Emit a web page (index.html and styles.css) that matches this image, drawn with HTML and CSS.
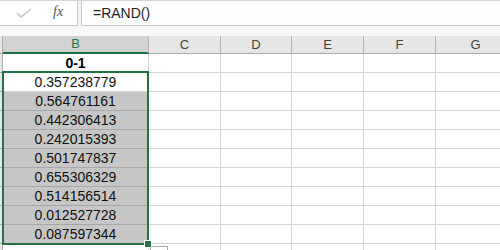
FILE: index.html
```html
<!DOCTYPE html>
<html>
<head>
<meta charset="utf-8">
<link rel="stylesheet" href="styles.css">
</head>
<body>
<div class="app">
  <div class="formula-bar">
    <div class="fb-left">
      <svg class="check" width="16" height="10" viewBox="0 0 16 10"><path d="M1 5 L5 9 L15 1" fill="none" stroke="#c4c4c4" stroke-width="1.6"/></svg>
      <span class="fx">fx</span>
    </div>
    <div class="fb-sep"></div>
    <div class="fb-input">=RAND()</div>
  </div>
  <div class="spacer"></div>
  <div class="sheet">
    <div class="grid">
      <div class="hc rh"></div>
      <div class="hc sel">B</div>
      <div class="hc">C</div>
      <div class="hc">D</div>
      <div class="hc">E</div>
      <div class="hc">F</div>
      <div class="hc">G</div>

      <div class="c rh"></div><div class="c title">0-1</div><div class="c"></div><div class="c"></div><div class="c"></div><div class="c"></div><div class="c"></div>
      <div class="c rh"></div><div class="c num active">0.357238779</div><div class="c"></div><div class="c"></div><div class="c"></div><div class="c"></div><div class="c"></div>
      <div class="c rh"></div><div class="c num shade">0.564761161</div><div class="c"></div><div class="c"></div><div class="c"></div><div class="c"></div><div class="c"></div>
      <div class="c rh"></div><div class="c num shade">0.442306413</div><div class="c"></div><div class="c"></div><div class="c"></div><div class="c"></div><div class="c"></div>
      <div class="c rh"></div><div class="c num shade">0.242015393</div><div class="c"></div><div class="c"></div><div class="c"></div><div class="c"></div><div class="c"></div>
      <div class="c rh"></div><div class="c num shade">0.501747837</div><div class="c"></div><div class="c"></div><div class="c"></div><div class="c"></div><div class="c"></div>
      <div class="c rh"></div><div class="c num shade">0.655306329</div><div class="c"></div><div class="c"></div><div class="c"></div><div class="c"></div><div class="c"></div>
      <div class="c rh"></div><div class="c num shade">0.514156514</div><div class="c"></div><div class="c"></div><div class="c"></div><div class="c"></div><div class="c"></div>
      <div class="c rh"></div><div class="c num shade">0.012527728</div><div class="c"></div><div class="c"></div><div class="c"></div><div class="c"></div><div class="c"></div>
      <div class="c rh"></div><div class="c num shade">0.087597344</div><div class="c"></div><div class="c"></div><div class="c"></div><div class="c"></div><div class="c"></div>
      <div class="c rh"></div><div class="c"></div><div class="c"></div><div class="c"></div><div class="c"></div><div class="c"></div><div class="c"></div>
    </div>
    <div class="selection"><div class="handle"></div></div>
    <div class="quick"></div>
  </div>
</div>
</body>
</html>
```
FILE: styles.css
```css
html, body {
  margin: 0;
  padding: 0;
  background: #ffffff;
  overflow: hidden;
}
.app {
  width: 500px;
  height: 250px;
  overflow: hidden;
  font-family: "Liberation Sans", Arial, sans-serif;
}
.formula-bar {
  display: flex;
  height: 26px;
  background: #f3f3f3;
  box-sizing: border-box;
  border-top: 1px solid #d4d4d4;
}
.fb-left {
  width: 78px;
  box-sizing: border-box;
  background: #ffffff;
  border-right: 1px solid #c8c8c8;
  border-bottom: 1px solid #c8c8c8;
  display: flex;
  align-items: center;
}
.check {
  margin-left: 16px;
  margin-top: -1px;
}
.fx {
  margin-left: 21px;
  font-family: "Liberation Serif", "Times New Roman", serif;
  font-style: italic;
  font-size: 14px;
  color: #555555;
  margin-top: -3px;
}
.fb-sep {
  width: 3px;
}
.fb-input {
  flex: 1;
  background: #fefefe;
  box-sizing: border-box;
  border-left: 1px solid #c8c8c8;
  border-bottom: 1px solid #c8c8c8;
  padding-left: 11px;
  font-size: 14px;
  color: #1e1e1e;
  line-height: 24px;
}
.spacer {
  height: 10px;
  background: #f7f7f7;
}
.sheet {
  position: relative;
}
.grid {
  display: grid;
  grid-template-columns: 3px 146px 72px 71px 72px 72px 80px;
  grid-auto-rows: 19px;
  grid-template-rows: 18px;
}
.hc {
  box-sizing: border-box;
  background: #e6e6e6;
  border-right: 1px solid #b4b4b4;
  border-bottom: 1px solid #ababab;
  font-size: 13px;
  color: #444444;
  text-align: center;
  line-height: 17px;
}
.hc.rh {
  border-right: 1px solid #ababab;
}
.hc.sel {
  background: #d2d2d2;
  color: #217346;
  border-bottom: 2px solid #217346;
  line-height: 16px;
}
.c {
  box-sizing: border-box;
  border-right: 1px solid #d4d4d4;
  border-bottom: 1px solid #d4d4d4;
  font-size: 14px;
  color: #000000;
  text-align: center;
  line-height: 18px;
}
.c.rh {
  background: #e6e6e6;
  border-right: 1px solid #ababab;
  border-bottom: 1px solid #ababab;
}
.title {
  font-weight: bold;
}
.num {
  color: #111111;
}
.shade {
  background: #c6c6c6;
  border-bottom-color: #a8a8a8;
}
.selection {
  position: absolute;
  left: 2px;
  top: 35px;
  width: 147px;
  height: 174px;
  box-sizing: border-box;
  border: 2px solid #217346;
}
.handle {
  position: absolute;
  right: -5px;
  bottom: -5px;
  width: 6px;
  height: 6px;
  background: #217346;
  border: 1px solid #ffffff;
}
.quick {
  position: absolute;
  left: 150px;
  top: 210px;
  width: 18px;
  height: 10px;
  box-sizing: border-box;
  border: 1px solid #a8a8a8;
  background: #ffffff;
}
```
